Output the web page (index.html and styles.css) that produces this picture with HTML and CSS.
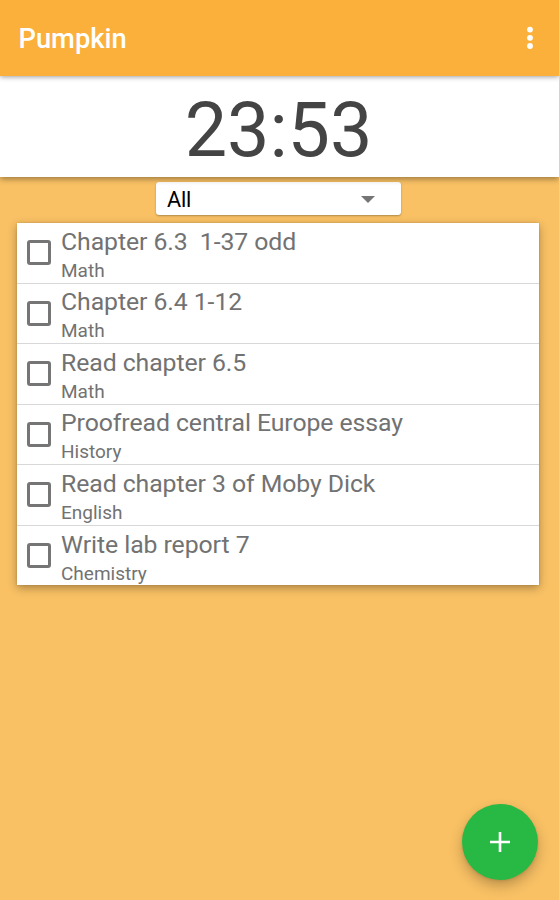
FILE: index.html
```html
<!DOCTYPE html>
<html lang="en">
<head>
<meta charset="utf-8">
<title>Pumpkin</title>
<link rel="stylesheet" href="styles.css">
</head>
<body>
<header class="app-bar">
  <h1 class="app-title">Pumpkin</h1>
  <svg class="overflow" viewBox="0 0 8 24"><circle cx="4" cy="3.6" r="2.9"/><circle cx="4" cy="11.8" r="2.9"/><circle cx="4" cy="20" r="2.9"/></svg>
</header>
<section class="clock"><span class="time">23:53</span></section>
<main class="content">
  <div class="filter">
    <span class="filter-label">All</span>
    <svg class="caret" viewBox="0 0 14 7"><path d="M0 0h14L7 7z"/></svg>
  </div>
  <ul class="tasks">
    <li class="task"><span class="box"></span><div class="text"><span class="name">Chapter 6.3  1-37 odd</span><span class="subject">Math</span></div></li>
    <li class="task"><span class="box"></span><div class="text"><span class="name">Chapter 6.4 1-12</span><span class="subject">Math</span></div></li>
    <li class="task"><span class="box"></span><div class="text"><span class="name">Read chapter 6.5</span><span class="subject">Math</span></div></li>
    <li class="task"><span class="box"></span><div class="text"><span class="name">Proofread central Europe essay</span><span class="subject">History</span></div></li>
    <li class="task"><span class="box"></span><div class="text"><span class="name">Read chapter 3 of Moby Dick</span><span class="subject">English</span></div></li>
    <li class="task"><span class="box"></span><div class="text"><span class="name">Write lab report 7</span><span class="subject">Chemistry</span></div></li>
  </ul>
</main>
<div class="fab"><svg class="plus" viewBox="0 0 20 20"><path d="M10 0v20M0 10h20"/></svg></div>
</body>
</html>
```
FILE: styles.css
```css
* { box-sizing: border-box; }
body {
  margin: 0;
  height: 900px;
  overflow: hidden;
  display: flex;
  flex-direction: column;
  background: #f9c164;
  font-family: Roboto, sans-serif;
}
.app-bar {
  position: relative;
  z-index: 2;
  flex: none;
  height: 76px;
  padding: 0 25px 0 18.5px;
  display: flex;
  align-items: center;
  justify-content: space-between;
  background: #fbb03b;
  box-shadow: 0 1px 5px rgba(0, 0, 0, .38);
}
.app-title {
  margin: 2px 0 0;
  font-size: 27.3px;
  line-height: 32px;
  font-weight: 500;
  color: #fff;
}
.overflow { width: 8px; height: 24px; fill: #fff; }
.clock {
  position: relative;
  z-index: 1;
  flex: none;
  height: 101px;
  display: flex;
  align-items: center;
  justify-content: center;
  background: #fff;
  box-shadow: 0 2px 6px rgba(0, 0, 0, .38);
}
.time { font-size: 75.5px; line-height: 90px; padding: 6px 2px 0 0; color: #444; letter-spacing: -.1px; }
.content { flex: 1; padding: 5px 20px 0 17px; }
.filter {
  width: 245px;
  height: 33px;
  margin: 0 0 8px 139px;
  padding: 0 26px 0 11px;
  display: flex;
  align-items: center;
  justify-content: space-between;
  background: #fff;
  border-radius: 3px;
  box-shadow: 0 1px 2px rgba(0, 0, 0, .3);
}
.filter-label { font-size: 21.7px; line-height: 28px; padding-top: 2px; color: #000; letter-spacing: -.15px; }
.caret { width: 14px; height: 7px; margin-top: 1px; fill: #757575; }
.tasks {
  margin: 0;
  padding: 0;
  list-style: none;
  background: #fff;
  box-shadow: 0 3px 9px rgba(0, 0, 0, .32), 0 0 2px rgba(0, 0, 0, .15);
}
.task {
  height: 60.6px;
  padding-left: 10px;
  display: flex;
  align-items: flex-start;
  gap: 10px;
  border-bottom: 1px solid #d8d8d8;
}
.task:last-child { height: 59.5px; border-bottom: 0; }
.box { width: 24px; height: 25px; margin-top: 17px; border: 2.5px solid #757575; border-width: 3px; border-radius: 3px; }
.text { display: flex; flex-direction: column; color: #727272; }
.name { font-size: 24.8px; line-height: 30px; margin-top: 3.7px; white-space: pre; letter-spacing: -.07px; }
.subject { font-size: 19px; line-height: 24px; margin-top: 2px; }
.fab {
  position: absolute;
  left: 461.5px;
  top: 803.7px;
  width: 76.5px;
  height: 76.5px;
  display: flex;
  align-items: center;
  justify-content: center;
  border-radius: 50%;
  background: #28b945;
  box-shadow: 0 6px 13px rgba(0, 0, 0, .24), 0 1px 3px rgba(0, 0, 0, .1);
}
.plus { width: 20px; height: 20px; stroke: #fff; stroke-width: 2.6; fill: none; }
```
